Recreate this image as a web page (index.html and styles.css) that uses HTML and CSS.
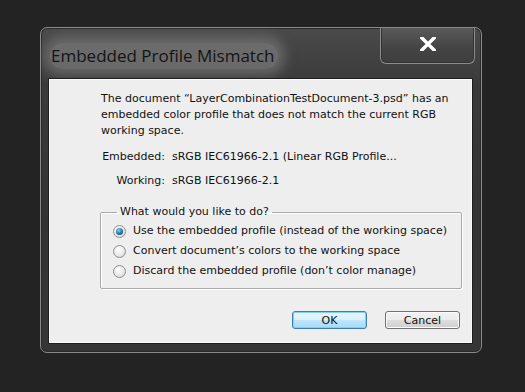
FILE: index.html
```html
<!DOCTYPE html>
<html lang="en">
<head>
    <meta charset="UTF-8">
    <title>Embedded Profile Mismatch</title>
    <link rel="stylesheet" href="styles.css">
</head>
<body>
    <div class="window">
        <div class="titlebar">
            <div class="title">Embedded Profile Mismatch</div>
            <button class="close-btn" aria-label="Close">
                <svg width="16" height="14" viewBox="0 0 16 14">
                    <path d="M2 1 L14 13 M14 1 L2 13" stroke="#fff" stroke-width="3.4" stroke-linecap="square"/>
                </svg>
            </button>
        </div>
        <div class="panel">
            <p class="message">
                The document “LayerCombinationTestDocument-3.psd” has an<br>
                embedded color profile that does not match the current RGB<br>
                working space.
            </p>
            <div class="info">
                <span class="label">Embedded:</span><span class="value">sRGB IEC61966-2.1 (Linear RGB Profile...</span>
                <span class="label">Working:</span><span class="value">sRGB IEC61966-2.1</span>
            </div>
            <fieldset class="group">
                <legend>What would you like to do?</legend>
                <label class="option"><span class="radio checked"></span>Use the embedded profile (instead of the working space)</label>
                <label class="option"><span class="radio"></span>Convert document’s colors to the working space</label>
                <label class="option"><span class="radio"></span>Discard the embedded profile (don’t color manage)</label>
            </fieldset>
            <div class="actions">
                <button class="btn default">OK</button>
                <button class="btn">Cancel</button>
            </div>
        </div>
    </div>
</body>
</html>
```

FILE: styles.css
```css
body {
    margin: 0;
    padding: 27px 0 0 40px;
    background-color: #232323;
    height: 392px;
    box-sizing: border-box;
    font-family: "DejaVu Sans", sans-serif;
    font-size: 11px;
    color: #111;
}
.window {
    width: 442px;
    height: 326px;
    box-sizing: border-box;
    border: 1px solid #8a8a8a;
    border-radius: 7px;
    background: linear-gradient(to bottom, #4a4a4a 0%, #3a3a3a 18%, #333 60%, #363636 100%);
    box-shadow: inset 0 0 0 1px #2a2a2a;
    display: flex;
    flex-direction: column;
    overflow: hidden;
}
.titlebar {
    height: 50px;
    display: flex;
    justify-content: space-between;
    align-items: flex-start;
    padding: 0 6px 0 9px;
}
.title {
    margin-top: 15px;
    padding: 1px 4px 2px 1px;
    font-family: "Open Sans", sans-serif;
    font-size: 17px;
    color: #141414;
    background: rgba(140, 140, 140, 0.55);
    border-radius: 12px;
    box-shadow: 0 0 12px 7px rgba(140, 140, 140, 0.5);
}
.close-btn {
    width: 95px;
    height: 37px;
    margin-top: -1px;
    border: 1px solid #8c8c8c;
    border-top: none;
    border-radius: 0 0 6px 6px;
    background: linear-gradient(to bottom, #5a5a5a, #444 60%, #3e3e3e);
    box-shadow: inset 0 0 0 1px #333;
    display: flex;
    justify-content: center;
    align-items: center;
    padding: 0 0 2px 0;
}
.panel {
    flex: 1;
    margin: 0 8px 8px 7px;
    background-color: #eeeeee;
    border: 1px solid #1e1e1e;
    box-shadow: inset 0 0 0 1px #fafafa;
    padding: 12px 10px 0 52px;
    display: flex;
    flex-direction: column;
}
.message {
    margin: 0;
    line-height: 16px;
}
.info {
    margin-top: 6px;
    display: grid;
    grid-template-columns: 64px auto;
    column-gap: 7px;
    line-height: 24px;
}
.label {
    text-align: right;
}
.group {
    margin: 11px 0 0 -1px;
    padding: 1px 0 7px 12px;
    border: 1px solid #a9a9a9;
    border-radius: 2px;
    box-shadow: 1px 1px 0 #fff, inset 1px 1px 0 #fff;
    display: flex;
    flex-direction: column;
}
.group legend {
    margin-left: 4px;
    padding: 0 3px;
    line-height: 16px;
}
.option {
    display: flex;
    align-items: center;
    line-height: 20px;
    gap: 7px;
}
.radio {
    width: 11px;
    height: 11px;
    border-radius: 50%;
    border: 1px solid #8e8f8f;
    background: radial-gradient(circle at 40% 35%, #ffffff 0%, #e8e8e8 55%, #cfcfcf 100%);
    display: flex;
    justify-content: center;
    align-items: center;
}
.radio.checked::after {
    content: "";
    width: 7px;
    height: 7px;
    border-radius: 50%;
    background: radial-gradient(circle at 40% 35%, #8ad2f5 0%, #1d6fa6 55%, #0b3f66 100%);
}
.actions {
    margin-top: 22px;
    margin-right: 2px;
    display: flex;
    justify-content: flex-end;
    gap: 18px;
}
.btn {
    width: 75px;
    height: 18px;
    padding: 0;
    font-family: "DejaVu Sans", sans-serif;
    font-size: 11px;
    color: #111;
    border: 1px solid #707070;
    border-radius: 3px;
    background: linear-gradient(to bottom, #f2f2f2 0%, #ebebeb 50%, #dddddd 51%, #cfcfcf 100%);
    box-shadow: inset 0 0 0 1px #fcfcfc;
}
.btn.default {
    border-color: #3c7fb1;
    background: linear-gradient(to bottom, #eaf6fd 0%, #d9f0fc 50%, #bee6fd 51%, #a7d9f5 100%);
    box-shadow: inset 0 0 0 1px #7fd2f5;
}
```
